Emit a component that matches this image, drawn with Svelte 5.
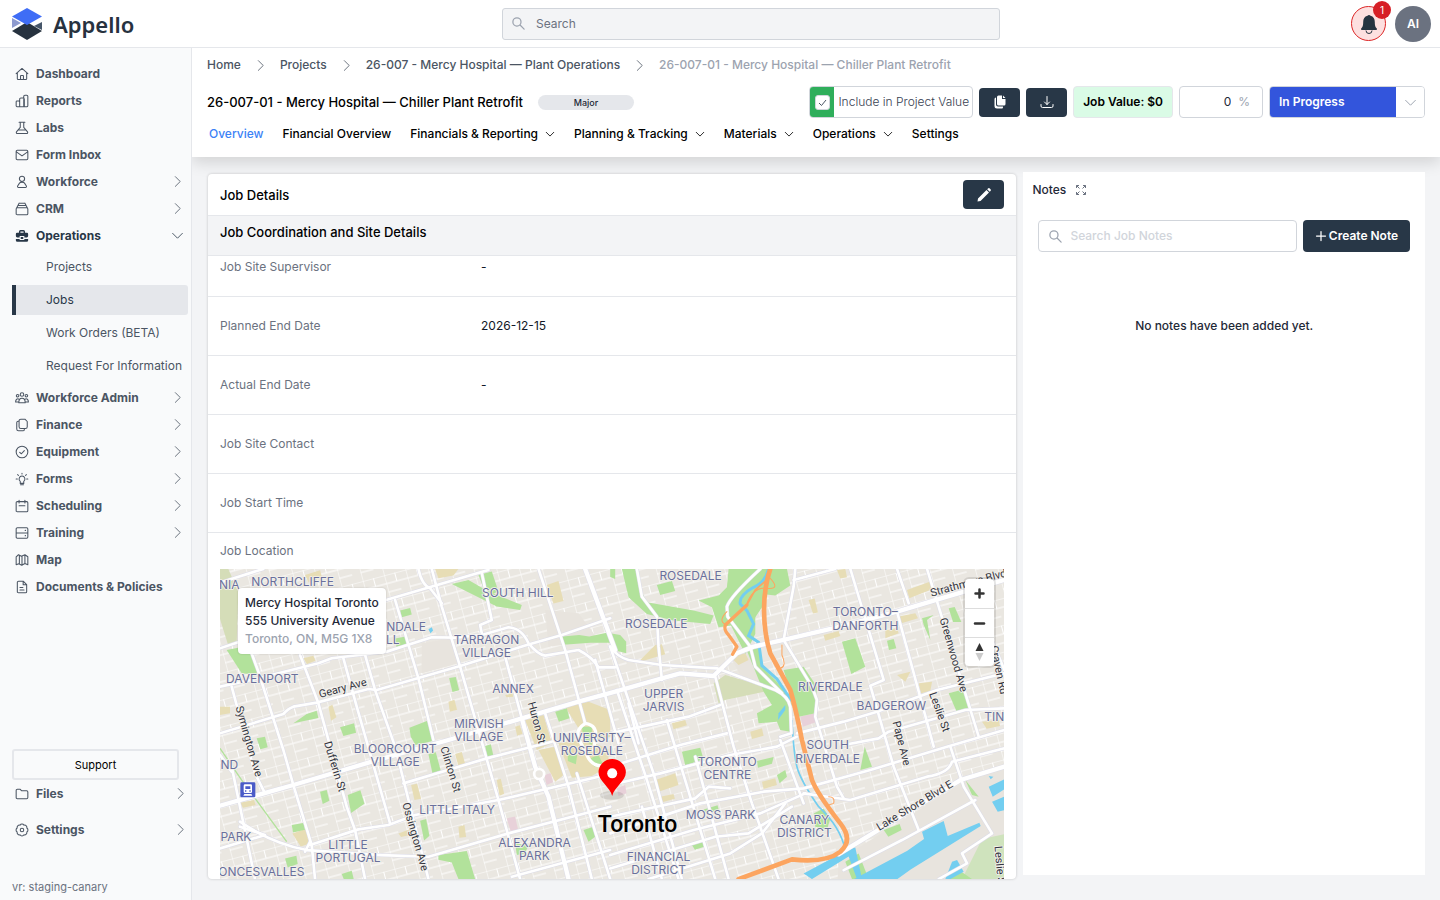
<script>
  const icons = {
    home: 'M2 11.5 12 2.5l10 9M4 10v10a1.5 1.5 0 0 0 1.5 1.5h13A1.5 1.5 0 0 0 20 20V10M9.5 21v-5.5a1 1 0 0 1 1-1h3a1 1 0 0 1 1 1V21',
    reports: 'M3 12h3.5A1.5 1.5 0 0 1 8 13.500V22H3.5A2 2 0 0 1 2 20.5v-7A1.5 1.5 0 0 1 3 12zM8 22V9a2 2 0 0 1 2-2h4a2 2 0 0 1 2 2v13H8zM15 22V4a2 2 0 0 1 2-2h3a2 2 0 0 1 2 2v16a2 2 0 0 1-2 2z',
    labs: 'M7 2h10M9 2v9M15 2v9l6.5 7.5a2 2 0 0 1-1.500 3H4a2 2 0 0 1-1.500-3L9 11M5.5 15.5h13',
    mail: 'M4 4h16a2 2 0 0 1 2 2v12a2 2 0 0 1-2 2H4a2 2 0 0 1-2-2V6a2 2 0 0 1 2-2zM3 7l9 6.5L21 7',
    user: 'M12 2a4.5 4.5 0 1 1 0 9 4.5 4.5 0 0 1 0-9zM8 13.500 4.500 19a1.700 1.700 0 0 0 1.500 2.500h12a1.700 1.700 0 0 0 1.500-2.500L16 13.500q-4-2.500-8 0z',
    crm: 'M7 2h10M5 6h14M4 10h16a2 2 0 0 1 2 2v8a2 2 0 0 1-2 2H4a2 2 0 0 1-2-2v-8a2 2 0 0 1 2-2zM3 10l2-4 2-4M21 10l-2-4-2-4',
    users: 'M12 3a3 3 0 1 1 0 6 3 3 0 0 1 0-6zM4.5 6a2.2 2.2 0 1 1 0 4.4 2.2 2.2 0 0 1 0-4.4zM19.5 6a2.2 2.2 0 1 1 0 4.4 2.2 2.2 0 0 1 0-4.4zM6.5 20c0-10 11-10 11 0zM6.5 19H1c0-5 3-6.5 6-5M17.5 19H23c0-5-3-6.5-6-5',
    copy: 'M10 2h7l4 4v9a3 3 0 0 1-3 3h-8a3 3 0 0 1-3-3V5a3 3 0 0 1 3-3zM7 5.5H5.5A2.5 2.5 0 0 0 3 8v11a3 3 0 0 0 3 3h7.5a2.5 2.5 0 0 0 2.5-2.5V18',
    check: 'M12 2a10 10 0 1 1 0 20 10 10 0 0 1 0-20zM8 12.5l3 2.5 5-5.5',
    bulb: 'M12 7a5 5 0 0 1 3 9v3.5H9V16a5 5 0 0 1 3-9zM9.5 22h5M12 2v1.5M2 12h2M20 12h2M4.5 4.5 6 6M19.5 4.5 18 6',
    calendar: 'M4 4.5h16a2 2 0 0 1 2 2V20a2 2 0 0 1-2 2H4a2 2 0 0 1-2-2V6.5a2 2 0 0 1 2-2zM7 2v5M17 2v5M7 11.5h10',
    server: 'M4 3h16a2 2 0 0 1 2 2v14a2 2 0 0 1-2 2H4a2 2 0 0 1-2-2V5a2 2 0 0 1 2-2zM2 12h20M17.5 7.5h.5M17.5 16.5h.5',
    map: 'M2 6.5 6 3l5 2.5L17 3l5 3.5V20l-5-2-5.5 3-5-2.5L2 20zM7.5 4v14.5M12 5.5V21M17 3.5V18',
    doc: 'M6 2h8l6 6v12a2 2 0 0 1-2 2H6a2 2 0 0 1-2-2V4a2 2 0 0 1 2-2zM14 2v6h6M8.5 13h5M8.5 17h7',
    folder: 'M4 4h5l2.5 2.5H20a2 2 0 0 1 2 2V18a2 2 0 0 1-2 2H4a2 2 0 0 1-2-2V6a2 2 0 0 1 2-2z',
    gear: 'M8.6 3.7a4 4 0 0 1 6.8 0 4 4 0 0 1 4.9 4.9 4 4 0 0 1 0 6.800 4 4 0 0 1-4.9 4.9 4 4 0 0 1-6.8 0 4 4 0 0 1-4.9-4.9 4 4 0 0 1 0-6.800 4 4 0 0 1 4.9-4.9zM12 9a3 3 0 1 1 0 6 3 3 0 0 1 0-6z',
    search: 'M9.5 3a6.5 6.5 0 1 1 0 13 6.5 6.5 0 0 1 0-13zM14.5 14.5 21 21',
    right: 'M8 3l9 9-9 9',
    down: 'M3 8l9 9 9-9',
    plus: 'M12 3v18M3 12h18'
  };

  const menu = [
    { label: 'Dashboard', icon: 'home' },
    { label: 'Reports', icon: 'reports' },
    { label: 'Labs', icon: 'labs' },
    { label: 'Form Inbox', icon: 'mail' },
    { label: 'Workforce', icon: 'user', more: true },
    { label: 'CRM', icon: 'crm', more: true },
    {
      label: 'Operations',
      icon: 'briefcase',
      more: true,
      children: ['Projects', 'Jobs', 'Work Orders (BETA)', 'Request For Information']
    },
    { label: 'Workforce Admin', icon: 'users', more: true },
    { label: 'Finance', icon: 'copy', more: true },
    { label: 'Equipment', icon: 'check', more: true },
    { label: 'Forms', icon: 'bulb', more: true },
    { label: 'Scheduling', icon: 'calendar', more: true },
    { label: 'Training', icon: 'server', more: true },
    { label: 'Map', icon: 'map' },
    { label: 'Documents & Policies', icon: 'doc' }
  ];

  const footerMenu = [
    { label: 'Files', icon: 'folder' },
    { label: 'Settings', icon: 'gear' }
  ];

  const crumbs = ['Home', 'Projects', '26-007 - Mercy Hospital — Plant Operations'];

  const tabs = [
    { label: 'Overview' },
    { label: 'Financial Overview' },
    { label: 'Financials & Reporting', more: true },
    { label: 'Planning & Tracking', more: true },
    { label: 'Materials', more: true },
    { label: 'Operations', more: true },
    { label: 'Settings' }
  ];

  const details = [
    { label: 'Job Site Supervisor', value: '-' },
    { label: 'Planned End Date', value: '2026-12-15' },
    { label: 'Actual End Date', value: '-' },
    { label: 'Job Site Contact', value: '' },
    { label: 'Job Start Time', value: '' }
  ];

  // map units are a third of a pixel
  const parks = [
    'M35 330l75-15 20 90-50-5z', 'M235 550l40-28 30-10 5 22z', 'M375 562l42-12 6 28-38 10z', 'M583 563l58-22 12 62-52 12-14-25z',
    'M702 414l20-3 10 40-20 5z', 'M125 595l25-5 8 32-22 6z', 'M555 212l30-8 5 20-30 8z', 'M540 296l32-6 5 24-32 10z',
    'M710 132l50-12 60 35 100 40-5 15-70-10z', 'M790 105l40-10 20 60-35 15z', 'M1042 290l50-5 30 5 63-14v32l-60 0-80 6z', 'M640 643l22-6 15 55-25 8z',
    'M810 618l17-5 8 35-18 4z', 'M398 765l38-14 12 40-40 28z', 'M315 755l20-5 8 32-20 10z', 'M615 842l18-5 10 50-16 14z',
    'M670 945l85-12 25 84h-50l-20-50-40-8z', 'M1020 515l35-10 8 30-32 10z', 'M230 855l35-6 5 20-36 8z', 'M210 955l34-8 4 25-30 10z',
    'M380 1002l30-10 6 25h-30z', 'M1100 560l30 0 0 55-25-15z', 'M1058 640l28 5-4 28-24-10z', 'M1125 655l25-10 12 25-25 10z', 'M900 910l40 5-10 25-25 5z',
    // east half
    'M1220 87h45l10 60 20 40 140 25 60 15-10 25-110-10-80-20-55-50z', 'M1325 135l45-12 10 30-45 12z', 'M1185 280l30 5 18 20 0 35-38-10z',
    'M1540 87h90l20 100-40 60-30 5-70 10-20-60-40-20 60-15 25-25z', 'M1635 87h80l10 50-45 30-40-5-20 60 0 60-30 60-45-90-30-35 70-70z',
    'M1590 320l40-10 10 70 60 60 30 50-5 85-30-5-10-25-55 5-5-30 45-25-25-40z', 'M1705 390l60-10 40 60-5 80-50 10z',
    'M1880 305l40-10 30 85-42 22z', 'M2015 302l20-5 8 28-22 5z', 'M2120 235l35-10-20 15 10 60-20-45z', 'M2200 205l18-4 20 45-25 0z',
    'M2200 460l45-12 18 55-40 10z', 'M1400 635l55-12 10 35-55 18z', 'M1625 663l50-12-5 20-42 12z', 'M1685 705l25-15 5 20-22 20z', 'M1948 620l22 60-35 10z',
    'M1465 808l42-12 4 15-38 10z', 'M1795 820l30-15 20 30-10 35-35-10z', 'M1430 915l35-12 4 16-30 10z', 'M2005 870l48-18 6 18-40 20z', 'M1890 965l40-25 30 77h-50z',
    'M2250 720l40 50-20-5zM2200 1010l30-20 40 27h-70z', 'M1105 870l30-10 5 30-20 15z', 'M1185 87h15v30l-15-6z'
  ];

  const paleParks = ['M15 87h25l30 70-5 150-25 10-25-80z', 'M1495 430l35-25 70 20 70 25-140 30-20 10z'];

  const campuses = [
    'M270 105l45-14 6 22-40 15z', 'M660 87h70l-15 20-45 8z', 'M995 135l35-12 15 60-30 8z', 'M265 355l30-8 6 15-25 10z', 'M15 500l30 0v20l-30 5z',
    'M340 500l12-6 12 38-16 10z', 'M700 485l18-6 8 30-22 6z', 'M588 735l18-4 12 45-20 4z', 'M720 642l20-6 10 35-20 8z', 'M845 720l12-4 10 45-14 6z',
    'M232 880l40-14 10 45-25 8z', 'M930 540l55-15 25 85-45 20z', 'M970 630l50-10 25 85-25 20z', 'M1050 500l70-15 65 25v80l-70 15z',
    'M1030 610l80-12 70 30v50l-50 30-60 5z', 'M730 860l18-5 5 36-20 2z', 'M550 880l38-14-10 20-20 5z', 'M900 560l14-4 8 25-16 6z', 'M75 788l42-8 5 15-38 8z', 'M870 465l22-5 2 10-20 2z',
    'M1270 365l50-50 20-2 10 30-75 22z', 'M1865 90l25-3 5 25-20 4z', 'M2075 150l70-25 12 20-75 30z', 'M2050 230l50-10 8 15-50 15z', 'M1825 285l45-12 5 15-45 14z',
    'M1780 180l18-4 10 42-15 3z', 'M2110 430l40-5-5 28-28 7z', 'M2045 405l40-10-15 30z', 'M1320 720l60-20 10 35-60 20z', 'M1605 575l35-10 5 22-35 10z', 'M1370 550l40-10 5 16-40 12z',
    'M2300 545l50-5 4 18-40 8z', 'M1640 725l40-10 5 20-40 12z', 'M1545 350l45-10 10 20-30 15z', 'M1335 770l40-8 4 14-36 10z', 'M2010 270l35-5 5 15-40 15z'
  ];

  const hospitals = ['M875 835l25-6 10 45-22 4z', 'M988 705l18-6 8 28-20 8z', 'M1755 530l40-10 10 25-42 15z', 'M1205 745l25-10 4 25-24 8z'];

  const water = [
    'M2120 875l65-32 12 45 95-40 4 10-210 130-40 29h-130l160-85 50-35z', 'M2320 740l47-22v30l-35 22zM2330 785l37-15v40l-20 5z', 'M1765 1000l140-75 15-3 20 95h-15l-25-68-110 68z',
    'M2210 965l15-5 20 35-40 22h-15z', 'M640 268l10-6 4 10-8 8z', 'M1690 520l20-25v15l-22 30z', 'M2320 708l14 2-8 8z'
  ];

  const rivers = ['M1660 87q-10 40-45 55-45 25-40 50l20 20 20 40-15 35 30 20 10 70 45 40 30 45 15 20'];
  const streams = ['M1730 540q5 100 15 140t65 120q65 60 80 130'];

  const roads = [
    'M15 128L145 87', 'M15 325L90 300', 'M500 184L820 90', 'M15 440L130 415 310 370 350 355 515 335 650 292 720 293 800 285 880 262Q920 265 940 310 970 345 990 347L1090 330Q1130 350 1150 382L1200 382',
    'M15 580L205 522Q220 505 235 500L305 488 460 447 485 450 735 378 935 315 1040 285 1185 235', 'M565 730L815 655 1010 605', 'M15 925L150 885 75 860',
    'M285 915L430 868 520 855 600 825 850 780 1150 710', 'M75 845Q170 910 275 930L420 940 500 945 640 950 880 880 1185 800', 'M50 440L120 700 150 760',
    'M110 340L130 395 205 630 235 735 290 915 300 1017', 'M255 345L310 490 395 800 420 870 450 1017', 'M385 355L425 500 525 850', 'M450 345L480 450 540 620 640 1017',
    'M540 180L610 415 655 600', 'M650 87L680 200 735 380 850 780 915 1017', 'M870 350L920 535', 'M970 87L1050 330 1110 550', 'M50 680L75 800 120 1017',
    'M800 100L830 240 795 255 800 280', 'M610 87Q620 135 645 145L680 190', 'M15 645L50 695', 'M285 905L270 935M990 520L1060 740 1130 1017', 'M1140 360L1210 610', 'M1085 700L1185 1017', 'M890 1010L1185 930',
    'M1185 320Q1205 350 1240 360L1340 375 1505 385 1680 450Q1720 470 1725 500L1728 580 1695 590', 'M1495 408L1565 340', 'M1635 87Q1545 170 1535 200L1537 230 1605 320 1620 380 1700 460',
    'M1265 87L1280 170 1325 230 1330 320 1340 420', 'M1185 580L1420 530 1515 495', 'M1185 680L1395 615 1535 580', 'M1185 735L1335 700 1545 645 1685 620 1745 590',
    'M1185 880L1455 790 1645 755 1765 745 1965 690 2195 620 2367 570', 'M1765 760L1905 780 2135 710Q2200 700 2210 665L2367 625', 'M1745 580L1885 545 1985 515 2165 450 2367 400',
    'M1885 615L1990 595 2020 575 2250 510 2367 505', 'M1185 945L1435 870 1635 820 1770 760', 'M1185 985L1500 890 1600 880 1730 800', 'M1300 1017L1545 940 1640 880 1710 790', 'M1185 830L1440 775 1480 740 1545 745',
    'M1185 320L1315 700 1400 1017', 'M1205 450L1295 720 1390 1017', 'M1355 540L1500 1017', 'M1500 410L1555 620 1610 790 1690 1017', 'M1695 600L1765 790', 'M1740 87L1735 140 1705 300 1790 440 1805 480 1800 530 1865 740 1885 775',
    'M1905 87L2005 420 1965 437 2035 680 2110 870', 'M2045 215L2155 620', 'M2045 87L2080 190', 'M2135 87L2290 590', 'M2205 620L2245 740 2330 880 2240 940 2255 970 2170 1017', 'M2325 290L2367 390', 'M1885 990L2060 900 2280 780',
    'M1735 120L1860 87', 'M1240 490L1270 610M1440 650L1540 1017M1280 800L1340 1017'
  ];

  const avenues = ['M15 797L235 735 470 665 700 600 920 535 1090 485 1200 455 1340 415 1395 400 1495 408 1565 340 1615 320 1705 300 1865 262 2045 215 2195 170 2367 120', 'M920 535L960 680 1000 770 1060 1017', 'M1110 87L1200 330', 'M1870 942L2235 720 2367 680'];

  const areas = [
    ['NIA', 43, 148], ['NORTHCLIFFE', 233, 139], ['SOUTH HILL', 908, 172], ['NDALE', 573, 273], ['LL', 533, 313], ['TARRAGON', 814, 312], ['VILLAGE', 814, 352],
    ['DAVENPORT', 142, 428], ['ANNEX', 894, 458], ['MIRVISH', 791, 563], ['VILLAGE', 791, 603], ['BLOORCOURT', 540, 640], ['VILLAGE', 540, 679],
    ['UNIVERSITY–', 1130, 607], ['ROSEDALE', 1130, 646], ['ND', 43, 686], ['LITTLE ITALY', 726, 823], ['PARK', 63, 903], ['LITTLE', 399, 927], ['PORTUGAL', 399, 966],
    ['ALEXANDRA', 958, 920], ['PARK', 958, 960], ['ONCESVALLES', 139, 1009], ['ROSEDALE', 1426, 120], ['ROSEDALE', 1323, 263], ['TORONTO–', 1950, 229], ['DANFORTH', 1950, 269],
    ['RIVERDALE', 1845, 452], ['UPPER', 1345, 474], ['JARVIS', 1345, 513], ['BADGEROW', 2028, 510], ['TIN', 2337, 544], ['SOUTH', 1837, 628], ['RIVERDALE', 1837, 668],
    ['TORONTO', 1536, 678], ['CENTRE', 1536, 717], ['MOSS PARK', 1516, 837], ['CANARY', 1767, 851], ['DISTRICT', 1767, 891], ['FINANCIAL', 1330, 963], ['DISTRICT', 1330, 1003]
  ];

  const streets = [
    ['Geary Ave', 383, 445, -15], ['Symington Ave', 101, 604, 74], ['Dufferin St', 359, 680, 73], ['Clinton St', 706, 688, 73], ['Huron St', 964, 548, 75],
    ['Ossington Ave', 600, 890, 74], ['Strathmore Blvd', 2259, 130, -15], ['Greenwood Ave', 2214, 345, 74], ['Leslie St', 2172, 516, 70], ['Pape Ave', 2058, 610, 76],
    ['Lake Shore Blvd E', 2098, 797, -31], ['Craven Rd', 2350, 390, 78], ['Leslie St', 2353, 980, 85]
  ];

  let included = $state(true);
  let percent = $state(0);
  let status = $state('In Progress');
</script>

{#snippet icon(name, size = 14, stroke = 1.8)}
  <svg class="icon" width={size} height={size} viewBox="0 0 24 24" fill="none" stroke="currentColor" stroke-width={stroke} stroke-linecap="round" stroke-linejoin="round" aria-hidden="true">
    {#if name === 'briefcase'}
      <path d="M8 7V4.500A1.500 1.500 0 0 1 9.500 3h5A1.500 1.500 0 0 1 16 4.500V7" stroke-width="2.500" />
      <path d="M3.500 6.500h17A2 2 0 0 1 22.500 8.500V12a2.500 2.500 0 0 1-2.500 2.500h-4V12H8v2.500H4A2.500 2.500 0 0 1 1.500 12V8.500a2 2 0 0 1 2-2zM9.800 13.500h4.400v3.500H9.800zM1.500 17h6.500v2h8v-2h6.500v2.500a2.500 2.500 0 0 1-2.500 2.500H4a2.500 2.500 0 0 1-2.500-2.500z" fill="currentColor" stroke="none" />
    {:else}
      <path d={icons[name]} />
    {/if}
  </svg>
{/snippet}

<header class="topbar">
  <a class="brand" href="#home">
    <svg width="30" height="32" viewBox="0 0 30 32" aria-hidden="true">
      <path d="M0 10l9 5-9 5z" fill="#8e9bcf" />
      <path d="M30 14v8l-8-4z" fill="#46566a" />
      <path d="M15 14l15 9-15 9L0 23z" fill="#27323f" />
      <path d="M15 0l15 8.500L15 17 0 8.500z" fill="#3f6df6" />
    </svg>
    <span>Appello</span>
  </a>
  <label class="search global">
    {@render icon('search', 15, 2)}
    <input type="search" placeholder="Search" aria-label="Search" />
  </label>
  <div class="account">
    <button class="bell" aria-label="Notifications">
      <svg width="18" height="20" viewBox="0 0 18 20" fill="#263441" aria-hidden="true">
        <path d="M9 1a2 2 0 0 0-1.500.8C4.500 2.500 3.200 5 3.200 8c0 4-.7 5.200-2 6.500-.5.700-.2 1.500.7 1.500h14.200c.9 0 1.200-.8.7-1.500-1.300-1.300-2-2.500-2-6.500 0-3-1.300-5.500-4.300-6.200A2 2 0 0 0 9 1z" />
        <path d="M6 16.500a3 3 0 0 0 6 0" fill="none" stroke="#263441" />
      </svg>
      <span class="badge">1</span>
    </button>
    <button class="avatar">AI</button>
  </div>
</header>

<div class="layout">
  <nav class="sidebar" aria-label="Main">
    {#each menu as item}
      <a class="item" class:open={item.children} href="#{item.icon}">
        {@render icon(item.icon)}
        <span>{item.label}</span>
        {#if item.more}
          {@render icon(item.children ? 'down' : 'right', 13, 1.5)}
        {/if}
      </a>
      {#if item.children}
        <div class="submenu">
          {#each item.children as child}
            <a class:current={child === 'Jobs'} href="#{child}">{child}</a>
          {/each}
        </div>
      {/if}
    {/each}
    <div class="sidebar-footer">
      <button class="support">Support</button>
      {#each footerMenu as item}
        <a class="item" href="#{item.icon}">
          {@render icon(item.icon)}
          <span>{item.label}</span>
          {@render icon('right', 13, 1.5)}
        </a>
      {/each}
      <p class="version">vr: staging-canary</p>
    </div>
  </nav>

  <main>
    <section class="page-header">
      <nav class="crumbs" aria-label="Breadcrumb">
        {#each crumbs as crumb}
          <a href="#{crumb}">{crumb}</a>
          {@render icon('right', 13, 1.5)}
        {/each}
        <span>26-007-01 - Mercy Hospital — Chiller Plant Retrofit</span>
      </nav>
      <div class="title-row">
        <h1>26-007-01 - Mercy Hospital — Chiller Plant Retrofit</h1>
        <span class="pill">Major</span>
        <div class="actions">
          <label class="include">
            <span class="tick">
              <input type="checkbox" bind:checked={included} />
              {#if included}
                <svg width="9" height="9" viewBox="0 0 9 9" fill="none" stroke="#4b5563" aria-hidden="true"><path d="M1 5l2.500 2.500L8 2" /></svg>
              {/if}
            </span>
            <span class="include-text">Include in Project Value</span>
          </label>
          <button class="dark" aria-label="Duplicate">
            <svg width="14" height="14" viewBox="0 0 14 14" fill="#fff" aria-hidden="true">
              <path d="M5.500.5H9V4h3.500v5A1.500 1.500 0 0 1 11 10.500H5.500A1.500 1.500 0 0 1 4 9V2A1.500 1.500 0 0 1 5.500.5zM10 .5L12.500 3H10z" />
              <path d="M3 2.500A1.500 1.500 0 0 0 1.500 4v7A2.500 2.500 0 0 0 4 13.500h4.500a1.500 1.500 0 0 0 1.500-2H5a2 2 0 0 1-2-2z" />
            </svg>
          </button>
          <button class="dark" aria-label="Download">
            <svg width="14" height="14" viewBox="0 0 14 14" fill="none" stroke="#fff" stroke-linecap="round" aria-hidden="true">
              <path d="M7 1.500v8M4.500 7L7 9.500 9.500 7M1 9.500V11a1.500 1.500 0 0 0 1.500 1.500h9A1.500 1.500 0 0 0 13 11V9.500" />
            </svg>
          </button>
          <span class="job-value">Job Value: $0</span>
          <label class="percent">
            <input type="text" inputmode="numeric" aria-label="Percent complete" bind:value={percent} />
            <span>%</span>
          </label>
          <div class="status">
            <select bind:value={status} aria-label="Status">
              <option>In Progress</option>
              <option>Complete</option>
            </select>
            {@render icon('down', 13, 1.8)}
          </div>
        </div>
      </div>
      <nav class="tabs" aria-label="Job sections">
        {#each tabs as tab, i}
          <a class:active={i === 0} href="#{tab.label}">
            {tab.label}
            {#if tab.more}{@render icon('down', 10, 2)}{/if}
          </a>
        {/each}
      </nav>
    </section>

    <div class="content">
      <section class="card">
        <div class="card-head">
          <h2>Job Details</h2>
          <button class="dark" aria-label="Edit">
            <svg width="14" height="14" viewBox="0 0 14 14" fill="#fff" aria-hidden="true">
              <path d="M1 10.500l8.500-8.500 2.500 2.500L3.500 13 .5 13.500zM10.200 1.300l.8-.8a1.300 1.300 0 0 1 1.800 0l.7.700a1.300 1.300 0 0 1 0 1.800l-.8.8z" />
            </svg>
          </button>
        </div>
        <h3>Job Coordination and Site Details</h3>
        <dl>
          {#each details as row}
            <div class="row">
              <dt>{row.label}</dt>
              <dd>{row.value}</dd>
            </div>
          {/each}
        </dl>
        <div class="location">
          <h4>Job Location</h4>
          <div class="map">
            <svg viewBox="15 87 2352 930" preserveAspectRatio="xMidYMid slice" role="img" aria-label="Map of Toronto">
              <defs>
                <pattern id="blocks" width="66" height="78" patternUnits="userSpaceOnUse" patternTransform="rotate(-15)">
                  <path d="M0 0H66M0 26H66M0 52H40M0 0V78M33 0V26" fill="none" stroke="#fff" stroke-width="3" />
                </pattern>
              </defs>
              <rect x="15" y="87" width="2352" height="930" fill="#eae7e1" />
              <rect x="15" y="87" width="2352" height="930" fill="url(#blocks)" />
              <path d="M620 310l90-15 20 75-110 30zM1545 350l60-25 90 130-120-50zM1870 960l400-250 97-40v347h-500zM990 210l100 10 60 80-150 20z" fill="#e8e4de" />
              {#each paleParks as d}<path {d} fill="#d5ddb8" />{/each}
              <path d="M2240 1017l60-120 67-15v135z" fill="#cfe3bd" />
              {#each campuses as d}<path {d} fill="#e7ddb5" />{/each}
              {#each hospitals as d}<path {d} fill="#e8d1d9" />{/each}
              {#each parks as d}<path {d} fill="#b2e29b" />{/each}
              <path d="M15 625L80 720 215 905" fill="none" stroke="#b2e29b" stroke-width="4" />
              {#each water as d}<path {d} fill="#73cef0" />{/each}
              {#each rivers as d}<path {d} fill="none" stroke="#73cef0" stroke-width="9" />{/each}
              {#each streams as d}<path {d} fill="none" stroke="#73cef0" stroke-width="5" />{/each}
              <g fill="none" stroke-linejoin="round" stroke-linecap="round">
                {#each roads as d}<path {d} stroke="#dcdce8" stroke-width="11" />{/each}
                {#each avenues as d}<path {d} stroke="#dcdce8" stroke-width="16" />{/each}
                {#each roads as d}<path {d} stroke="#fff" stroke-width="8" />{/each}
                {#each avenues as d}<path {d} stroke="#fff" stroke-width="13" />{/each}
                <circle cx="972" cy="702" r="15" fill="#eae7e1" stroke="#fff" stroke-width="8" />
                <path d="M1110 550q-30 20-20 45l30 60q20 30 55 20M1110 550q40 5 30 50l-5 30" stroke="#fff" stroke-width="10" />
                <path d="M1660 110q40 40-5 35-40-5-60 45M1700 315v30q15 35-5 40M1535 215q-30 30 0 40M1840 770q20 0 15 20l-15 5" stroke="#fca560" stroke-width="3" />
                <path d="M1660 115L1620 150 1595 195" stroke="#fca560" stroke-width="5" />
                <path d="M1595 195L1530 255Q1525 270 1540 285L1565 320 1552 343" stroke="#fca560" stroke-width="10" />
                <path d="M1665 87C1640 160 1640 260 1665 340L1725 450Q1740 500 1760 600L1790 720Q1805 760 1875 850 1915 900 1875 935 1830 970 1730 958L1570 1017" stroke="#fca560" stroke-width="14" />
              </g>
              <g class="areas">
                {#each areas as [name, x, y]}<text {x} {y}>{name}</text>{/each}
              </g>
              <g class="streets">
                {#each streets as [name, x, y, angle]}
                  <text transform="translate({x} {y}) rotate({angle})" dy="10">{name}</text>
                {/each}
              </g>
              <text class="city" x="1267" y="876">Toronto</text>
              <g transform="translate(76 727)">
                <rect width="45" height="45" rx="4" fill="#4a5bc8" />
                <path d="M14 6h17a4 4 0 0 1 4 4v18a4 4 0 0 1-4 4H14a4 4 0 0 1-4-4V10a4 4 0 0 1 4-4zM15 12v8h15v-8zM14 24v4h4v-4zM27 24v4h4v-4zM12 35h21l3 5H9z" fill="#fff" fill-rule="evenodd" />
              </g>
              <ellipse cx="1190" cy="766" rx="36" ry="13" fill="#000" opacity="0.1" />
              <path d="M1191 768c-6-26-41-45-41-71a41 40 0 0 1 82 0c0 26-35 45-41 71z" fill="#f00" />
              <circle cx="1191" cy="700" r="15" fill="#fff" />
            </svg>
            <div class="address">
              <p>Mercy Hospital Toronto</p>
              <p>555 University Avenue</p>
              <p class="city-line">Toronto, ON, M5G 1X8</p>
            </div>
            <div class="zoom">
              <button aria-label="Zoom in"><svg width="11" height="11" viewBox="0 0 11 11" fill="none" stroke="#333" stroke-width="2.500" stroke-linecap="round"><path d="M5.500 1.500v8M1.500 5.500h8" /></svg></button>
              <button aria-label="Zoom out"><svg width="13" height="11" viewBox="0 0 13 11" fill="none" stroke="#333" stroke-width="2.500" stroke-linecap="round"><path d="M2 5.500h9" /></svg></button>
              <button aria-label="Reset north"><svg width="9" height="18" viewBox="0 0 9 18"><path d="M4.500 0l4 8h-8z" fill="#333" /><path d="M4.500 18l4-8h-8z" fill="#ccc" /></svg></button>
            </div>
          </div>
        </div>
      </section>

      <aside class="notes">
        <div class="notes-head">
          <h2>Notes</h2>
          <button class="expand" aria-label="Expand notes">
            <svg width="10" height="10" viewBox="0 0 10 10" fill="none" stroke="#6b7280" aria-hidden="true">
              <path d="M3 .5H.5V3M.5.5L3.500 3.500M7 .5h2.500V3M9.500.5L6.500 3.500M.5 7v2.500H3M.5 9.500l3-3M9.500 7v2.500H7M9.500 9.500l-3-3" />
            </svg>
          </button>
        </div>
        <div class="notes-tools">
          <label class="search">
            {@render icon('search', 15, 2)}
            <input type="search" placeholder="Search Job Notes" aria-label="Search Job Notes" />
          </label>
          <button class="dark create">{@render icon('plus', 12, 2.5)} Create Note</button>
        </div>
        <p class="empty">No notes have been added yet.</p>
      </aside>
    </div>
  </main>
</div>

<style>
  :global(body) {
    margin: 0;
    background: #f3f4f6;
    color: #1f2937;
    font: 400 12px/18px Inter, 'Liberation Sans', sans-serif;
  }

  :global(#app) {
    display: flex;
    flex-direction: column;
    min-height: 100vh;
  }

  h1, h2, h3, h4, p, dl, dd {
    margin: 0;
    font-weight: 400;
  }

  a {
    color: inherit;
    text-decoration: none;
  }

  button, input, select {
    box-sizing: border-box;
    font: inherit;
    color: inherit;
  }

  button {
    cursor: pointer;
  }

  .icon {
    flex: none;
  }

  .topbar {
    position: relative;
    z-index: 1;
    box-sizing: border-box;
    display: flex;
    align-items: center;
    height: 48px;
    padding: 0 9px 0 12px;
    background: #fff;
    border-bottom: 1px solid #e5e7eb;
  }

  .brand {
    display: flex;
    align-items: center;
    gap: 11px;
    width: 139px;
    color: #27323f;
    font: 600 22px/32px 'Noto Sans', sans-serif;
  }

  .search {
    box-sizing: border-box;
    display: flex;
    align-items: center;
    gap: 7px;
    flex: 1;
    height: 32px;
    padding: 0 9px;
    background: #fff;
    border: 1px solid #d1d5db;
    border-radius: 4px;
    color: #9ca3af;
  }

  .search input {
    flex: 1;
    min-width: 0;
    padding: 0;
    border: 0;
    outline: 0;
    background: none;
    color: #374151;
    font-weight: 500;
  }

  .search input::placeholder {
    color: #d1d5db;
    opacity: 1;
  }

  .search.global {
    gap: 10px;
    max-width: 498px;
    margin: 0 auto;
    padding: 0 8px;
    border-radius: 3px;
    background: #f3f4f6;
  }

  .search.global input {
    font-weight: 400;
  }

  .search.global input::placeholder {
    color: #6b7280;
  }

  .account {
    display: flex;
    align-items: center;
    gap: 9px;
  }

  .bell, .avatar {
    display: flex;
    align-items: center;
    justify-content: center;
    width: 36px;
    height: 36px;
    padding: 0;
    border-radius: 50%;
  }

  .bell {
    position: relative;
    width: 35px;
    height: 35px;
    background: #fde0e0;
    border: 1px solid #dc2626;
  }

  .badge {
    position: absolute;
    top: -6px;
    right: -6px;
    width: 18px;
    height: 18px;
    border-radius: 50%;
    background: #d61f26;
    color: #fff;
    font-size: 10px;
  }

  .avatar {
    border: 0;
    background: #6b7280;
    color: #fff;
    font-weight: 600;
  }

  .layout {
    display: flex;
    flex: 1;
  }

  .sidebar {
    position: relative;
    z-index: 1;
    box-sizing: border-box;
    display: flex;
    flex-direction: column;
    flex: none;
    width: 192px;
    padding: 12px 3px 4px 12px;
    background: #f9fafb;
    border-right: 1px solid #e5e7eb;
    color: #4b5563;
  }

  .item {
    display: flex;
    align-items: center;
    gap: 7px;
    height: 27px;
    padding: 0 4px 0 3px;
    font-weight: 700;
  }

  .item span {
    flex: 1;
  }

  .item.open {
    color: #283747;
  }

  .submenu {
    display: flex;
    flex-direction: column;
    gap: 3px;
    padding: 3px 0;
  }

  .submenu a {
    padding: 6px 0 6px 30px;
    border-left: 4px solid transparent;
    border-radius: 0 3px 3px 0;
    white-space: nowrap;
  }

  .submenu .current {
    background: #e5e7eb;
    border-color: #283747;
    color: #283747;
  }

  .sidebar-footer {
    display: flex;
    flex-direction: column;
    margin-top: auto;
  }

  .sidebar-footer .item {
    margin-bottom: 9px;
    padding-right: 1px;
  }

  .support {
    height: 31px;
    margin-right: 9px;
    border: 2px solid #e5e7eb;
    border-radius: 3px;
    background: #f9fafb;
    color: #000;
    font-size: 11px;
  }

  .version {
    margin-top: 26px;
    color: #6b7280;
    font-size: 11px;
  }

  main {
    display: flex;
    flex-direction: column;
    flex: 1;
    min-width: 0;
  }

  .page-header {
    padding: 8px 15px 14px;
    background: #fff;
    box-shadow: 0 6px 14px rgba(0, 0, 0, 0.13);
  }

  .crumbs {
    display: flex;
    align-items: center;
    gap: 13px;
    color: #4b5563;
    font-weight: 500;
  }

  .crumbs span {
    color: #9ca3af;
  }

  .title-row {
    display: flex;
    align-items: center;
    gap: 15px;
    margin: 12px 0 7px;
  }

  h1, h2, h3 {
    color: #000;
    font-size: 13px;
    font-weight: 500;
  }

  .pill {
    width: 96px;
    border-radius: 8px;
    background: #e5e7eb;
    font-size: 9px;
    font-weight: 500;
    line-height: 15px;
    text-align: center;
  }

  .actions {
    display: flex;
    align-items: center;
    gap: 6px;
    height: 32px;
    margin-left: auto;
  }

  .include, .job-value, .percent, .status {
    box-sizing: border-box;
    display: flex;
    align-items: center;
    height: 32px;
    border: 1px solid #d1d5db;
    border-radius: 4px;
    overflow: hidden;
  }

  .tick {
    display: grid;
    place-items: center;
    width: 24px;
    height: 100%;
    background: #2fae5b;
  }

  .tick > * {
    grid-area: 1 / 1;
  }

  .tick input {
    width: 15px;
    height: 15px;
    margin: 0;
    appearance: none;
    background: #fff;
    border: 1px solid #d1d5db;
    border-radius: 3px;
  }

  .tick svg {
    z-index: 1;
    pointer-events: none;
  }

  .include-text {
    padding: 0 3px 0 4px;
    color: #374151;
    font-weight: 300;
  }

  .dark {
    display: flex;
    align-items: center;
    justify-content: center;
    width: 41px;
    height: 29px;
    padding: 0;
    border: 0;
    border-radius: 4px;
    background: #283747;
    color: #fff;
  }

  .job-value {
    padding: 0 9px;
    border-color: #e5e7eb;
    background: #dafbe6;
    color: #000;
    font-weight: 600;
  }

  .percent {
    width: 84px;
    gap: 7px;
    padding: 0 12px;
    color: #9ca3af;
  }

  .percent input {
    flex: 1;
    width: 0;
    padding: 0;
    border: 0;
    outline: 0;
    color: #1f2937;
    text-align: right;
  }

  .status {
    position: relative;
    width: 156px;
    color: #9ca3af;
  }

  .status select {
    width: 100%;
    height: 100%;
    padding: 0 9px;
    border: 0;
    appearance: none;
    background: linear-gradient(to left, #fff 28px, #3355dc 28px);
    color: #fff;
    font-weight: 600;
  }

  .status :global(.icon) {
    position: absolute;
    right: 7px;
    pointer-events: none;
  }

  .tabs {
    display: flex;
    gap: 19px;
    padding-left: 2px;
    color: #000;
    font-weight: 500;
  }

  .tabs a {
    display: flex;
    align-items: center;
    gap: 7px;
  }

  .tabs .active {
    color: #3b82f6;
  }

  .content {
    display: flex;
    gap: 7px;
    flex: 1;
    padding: 15px 15px 21px 16px;
  }

  .card {
    flex: 1;
    min-width: 0;
    margin-top: 2px;
    background: #fff;
    border-radius: 4px;
    box-shadow: 0 0 3px rgba(0, 0, 0, 0.2);
    overflow: hidden;
  }

  .card-head {
    display: flex;
    align-items: center;
    justify-content: space-between;
    height: 41px;
    padding: 0 12px;
    border-bottom: 1px solid #e5e7eb;
  }

  h3 {
    padding: 7px 12px 14px;
    background: #f3f4f6;
    border-bottom: 1px solid #e5e7eb;
  }

  .row {
    display: flex;
    padding: 20px 12px;
    border-bottom: 1px solid #e5e7eb;
  }

  .row:first-child {
    padding-top: 2px;
  }

  dt {
    width: 261px;
    color: #6b7280;
  }

  dd {
    color: #111827;
  }

  .location {
    padding: 9px 12px 0;
  }

  h4 {
    margin-bottom: 9px;
    color: #6b7280;
  }

  .map {
    position: relative;
  }

  .map > svg {
    display: block;
    width: 100%;
    height: 310px;
  }

  .map text {
    text-anchor: middle;
    paint-order: stroke;
    stroke: #f3f1ec;
    stroke-width: 5px;
    stroke-linejoin: round;
  }

  .areas {
    fill: #6a709c;
    font: 400 36px Inter, sans-serif;
  }

  .streets {
    fill: #33353f;
    font: 400 33px Roboto, sans-serif;
  }

  .map .city {
    fill: #000;
    font: 500 69px Roboto, sans-serif;
  }

  .address {
    position: absolute;
    top: 19px;
    left: 18px;
    padding: 6px 7px;
    background: #fff;
    border-radius: 4px;
    box-shadow: 0 0 2px rgba(0, 0, 0, 0.2);
  }

  .address p {
    font-weight: 500;
  }

  .address .city-line {
    color: #9ca3af;
  }

  .zoom {
    position: absolute;
    top: 10px;
    right: 10px;
    background: #fff;
    border-radius: 4px;
    box-shadow: 0 0 0 2px rgba(0, 0, 0, 0.1);
  }

  .zoom button {
    display: flex;
    align-items: center;
    justify-content: center;
    width: 29px;
    height: 29px;
    padding: 0;
    border: 0;
    background: none;
  }

  .zoom button + button {
    border-top: 1px solid #ddd;
  }

  .notes {
    flex: none;
    width: 33%;
    margin-bottom: 4px;
    background: #fff;
  }

  .notes-head {
    display: flex;
    align-items: center;
    gap: 10px;
    padding: 9px;
  }

  .notes-head h2 {
    color: #1f2937;
    font-size: 12px;
  }

  .expand {
    display: flex;
    padding: 0;
    border: 0;
    background: none;
  }

  .notes-tools {
    display: flex;
    gap: 6px;
    padding: 12px 15px;
  }

  .dark.create {
    width: 107px;
    height: 32px;
    gap: 2px;
    font-weight: 600;
  }

  .empty {
    margin-top: 53px;
    font-weight: 500;
    text-align: center;
  }
</style>
